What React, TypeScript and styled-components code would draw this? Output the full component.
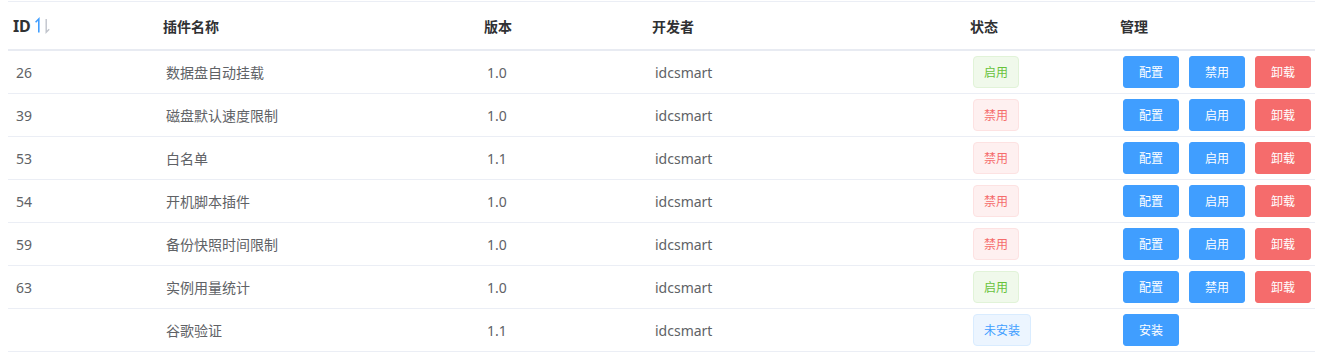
import React from "react";
import styled, { createGlobalStyle } from "styled-components";

const GlobalStyle = createGlobalStyle`
  html, body { margin: 0; padding: 0; background: #fff; }
  body { font-family: "Noto Sans", "Noto Sans CJK SC", sans-serif; }
`;

const Page = styled.div`
  padding: 1px 5px 0 8px;
`;

const Table = styled.div`
  width: 1307px;
  border-top: 1px solid #ebeef5;
`;

const cols = "150px 321px 168px 318px 150px 200px";

const HeadRow = styled.div`
  display: grid;
  grid-template-columns: ${cols};
  height: 47px;
  border-bottom: 2px solid #e8ebf2;
`;

const Th = styled.div`
  display: flex;
  align-items: center;
  padding-left: 5px;
  font-size: 14px;
  font-weight: 700;
  color: #303133;
`;

const IdLabel = styled.span`
  font-size: 16px;
  letter-spacing: -0.3px;
`;

const Row = styled.div`
  display: grid;
  grid-template-columns: ${cols};
  height: 42px;
  border-bottom: 1px solid #ebeef5;
`;

const Td = styled.div`
  display: flex;
  align-items: center;
  padding-left: 8px;
  font-size: 14px;
  color: #606266;
  white-space: nowrap;
`;

type TagKind = "success" | "danger" | "primary";

const tagColors: Record<TagKind, { bg: string; bd: string; fg: string }> = {
  success: { bg: "#f0f9eb", bd: "#e1f3d8", fg: "#67c23a" },
  danger: { bg: "#fef0f0", bd: "#fde2e2", fg: "#f56c6c" },
  primary: { bg: "#ecf5ff", bd: "#d9ecff", fg: "#409eff" },
};

const Tag = styled.span<{ $kind: TagKind }>`
  display: inline-flex;
  align-items: center;
  box-sizing: border-box;
  height: 32px;
  padding: 0 10px;
  font-size: 12px;
  border-radius: 4px;
  background: ${(p) => tagColors[p.$kind].bg};
  border: 1px solid ${(p) => tagColors[p.$kind].bd};
  color: ${(p) => tagColors[p.$kind].fg};
`;

const Actions = styled.div`
  display: flex;
  gap: 10px;
`;

const Button = styled.button<{ $danger?: boolean }>`
  box-sizing: border-box;
  height: 32px;
  width: 56px;
  padding: 0;
  font-family: inherit;
  font-size: 12px;
  color: #fff;
  border: 1px solid ${(p) => (p.$danger ? "#f56c6c" : "#409eff")};
  background: ${(p) => (p.$danger ? "#f56c6c" : "#409eff")};
  border-radius: 3px;
  cursor: pointer;
`;

const SortIcon = styled.svg`
  margin-left: 4px;
  flex: none;
`;

type Status = "on" | "off" | "none";

const rows: { id: string; name: string; ver: string; status: Status }[] = [
  { id: "26", name: "数据盘自动挂载", ver: "1.0", status: "on" },
  { id: "39", name: "磁盘默认速度限制", ver: "1.0", status: "off" },
  { id: "53", name: "白名单", ver: "1.1", status: "off" },
  { id: "54", name: "开机脚本插件", ver: "1.0", status: "off" },
  { id: "59", name: "备份快照时间限制", ver: "1.0", status: "off" },
  { id: "63", name: "实例用量统计", ver: "1.0", status: "on" },
  { id: "", name: "谷歌验证", ver: "1.1", status: "none" },
];

export default function App() {
  return (
    <Page>
      <GlobalStyle />
      <Table>
        <HeadRow>
          <Th>
            <IdLabel>ID</IdLabel>
            <SortIcon width="17" height="17" viewBox="0 0 17 17" fill="none">
              <path d="M4.8 15.5V2L1.6 5.2" stroke="#409eff" strokeWidth="1.6" />
              <path d="M12.2 2V15.2L15.2 12.2" stroke="#c0c4cc" strokeWidth="1.4" />
            </SortIcon>
          </Th>
          <Th>插件名称</Th>
          <Th>版本</Th>
          <Th>开发者</Th>
          <Th>状态</Th>
          <Th>管理</Th>
        </HeadRow>
        {rows.map((r, i) => (
          <Row key={i}>
            <Td>{r.id}</Td>
            <Td>{r.name}</Td>
            <Td>{r.ver}</Td>
            <Td>idcsmart</Td>
            <Td>
              {r.status === "on" && <Tag $kind="success">启用</Tag>}
              {r.status === "off" && <Tag $kind="danger">禁用</Tag>}
              {r.status === "none" && <Tag $kind="primary">未安装</Tag>}
            </Td>
            <Td>
              {r.status === "none" ? (
                <Actions>
                  <Button>安装</Button>
                </Actions>
              ) : (
                <Actions>
                  <Button>配置</Button>
                  <Button>{r.status === "on" ? "禁用" : "启用"}</Button>
                  <Button $danger>卸载</Button>
                </Actions>
              )}
            </Td>
          </Row>
        ))}
      </Table>
    </Page>
  );
}
